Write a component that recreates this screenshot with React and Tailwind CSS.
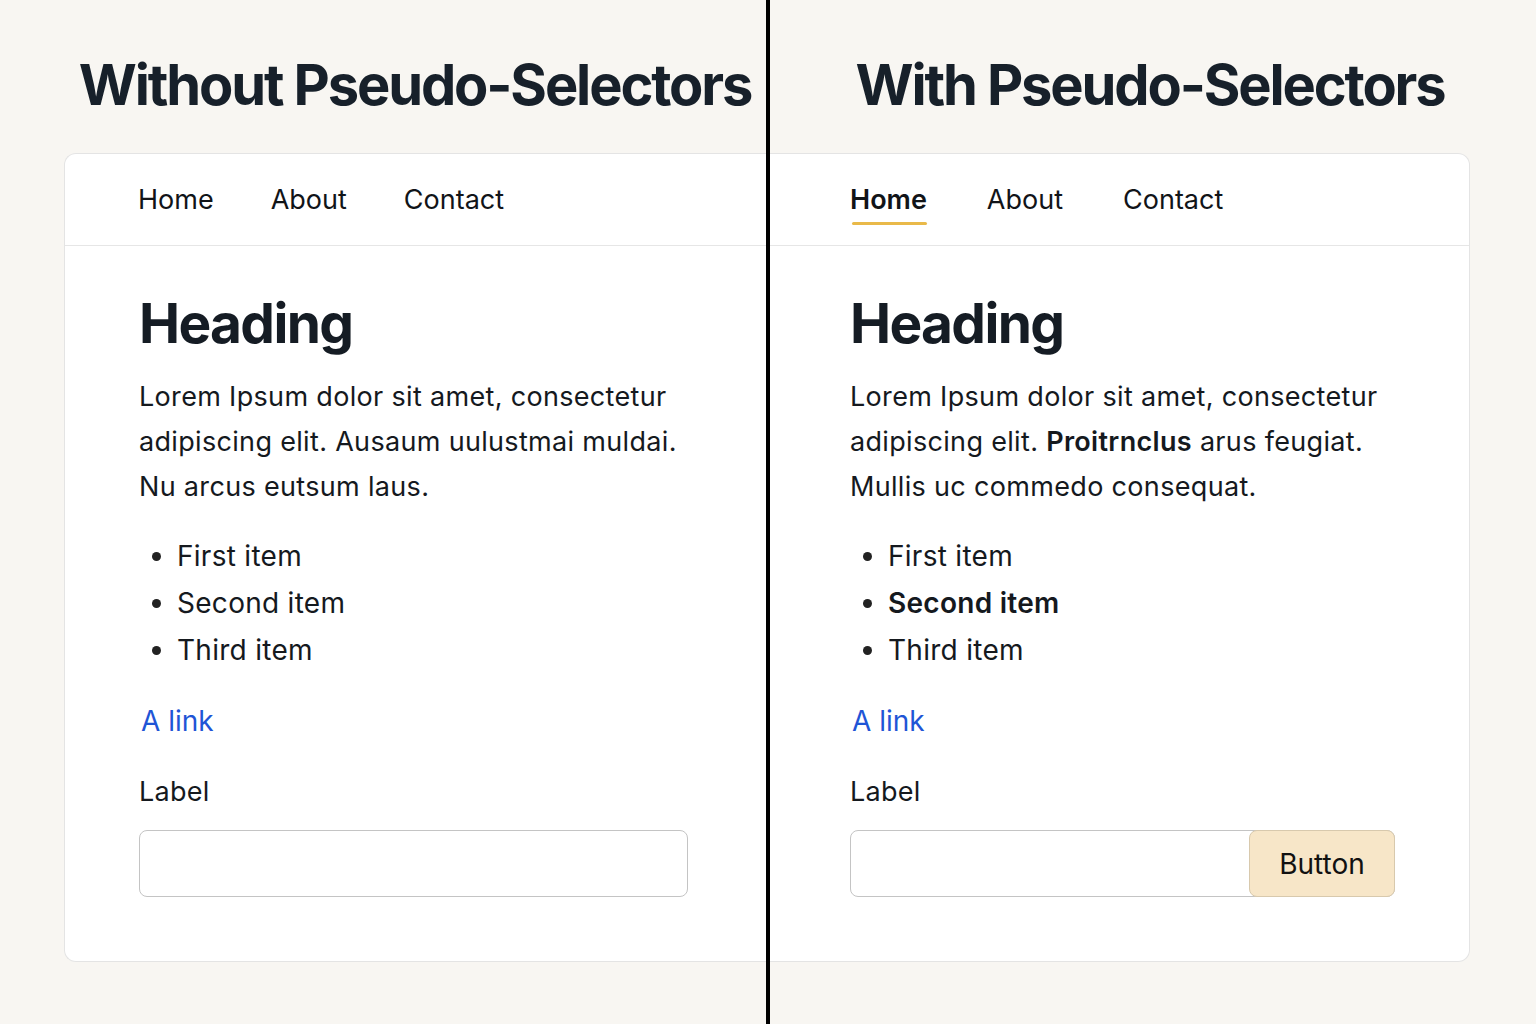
import clsx from 'clsx';

function Nav({ active }) {
  const items = ['Home', 'About', 'Contact'];
  return (
    <div className={clsx('h-[92px] border-b border-[#e6e6e6] flex items-center', active ? 'pl-[80px] gap-[60px]' : 'pl-[73px] gap-[57px]')}>
      {items.map((item) => (
        <span key={item} className="relative text-[27px] leading-none text-[#111418]">
          <span className={clsx(active && item === 'Home' && 'font-semibold')}>{item}</span>
          {active && item === 'Home' && (
            <span className="absolute left-[2px] right-0 -bottom-[12px] h-[3px] bg-[#e9b949] rounded-full" />
          )}
        </span>
      ))}
    </div>
  );
}

function Panel({ pseudo }) {
  return (
    <div
      className={clsx(
        'h-[809px] bg-white border-y border-[#e4e4e4]',
        pseudo ? 'border-r rounded-r-xl' : 'border-l rounded-l-xl'
      )}
    >
      <Nav active={pseudo} />
      <div className={clsx('pt-[50px] text-[#15191e]', pseudo ? 'pl-[80px] pr-[75px]' : 'pl-[74px] pr-[77px]')}>
        <h2 className="text-[55px] leading-none font-bold tracking-[-0.03em] text-[#151c24]">Heading</h2>

        <p className="mt-[23px] text-[27px] leading-[45px] tracking-[0.012em]">
          {pseudo ? (
            <>
              Lorem Ipsum dolor sit amet, consectetur
              <br />
              adipiscing elit. <b className="font-semibold">Proitrnclus</b> arus feugiat.
              <br />
              Mullis uc commedo consequat.
            </>
          ) : (
            <>
              Lorem Ipsum dolor sit amet, consectetur
              <br />
              adipiscing elit. Ausaum uulustmai muldai.
              <br />
              Nu arcus eutsum laus.
            </>
          )}
        </p>

        <ul className="mt-[24px] list-disc pl-[38px] text-[28px] leading-[47px] tracking-[0.01em] marker:text-[#222]">
          <li>First item</li>
          <li className={clsx(pseudo && 'font-semibold')}>Second item</li>
          <li>Third item</li>
        </ul>

        <a href="#" className="block mt-[27px] ml-[2px] text-[28px] leading-[40px] text-[#1f55d6]">
          A link
        </a>

        <label className="block mt-[31px] text-[27px] leading-[40px] tracking-[0.01em]">Label</label>

        {pseudo ? (
          <div className="mt-[18px] flex h-[67px] w-[545px] rounded-lg border border-[#c4c4c4] bg-white">
            <div className="flex-1" />
            <button className="-my-px -mr-px w-[146px] rounded-lg border border-[#d8c9ad] bg-[#f7e6c8] text-[28px] text-[#111]">
              Button
            </button>
          </div>
        ) : (
          <div className="mt-[18px] h-[67px] w-[549px] rounded-lg border border-[#c4c4c4] bg-white" />
        )}
      </div>
    </div>
  );
}

export default function App() {
  return (
    <div className="flex h-[1024px] w-[1536px] bg-[#f8f6f2] font-['Inter','Liberation_Sans',sans-serif] overflow-hidden">
      <div className="w-[766px] pl-[64px] flex flex-col">
        <div className="h-[153px] flex items-center justify-center pt-[16px]">
          <h1 className="text-[56px] font-bold tracking-[-0.038em] text-[#17202a] leading-none">
            Without Pseudo-Selectors
          </h1>
        </div>
        <Panel pseudo={false} />
      </div>

      <div className="w-[4px] h-full bg-black" />

      <div className="w-[700px] flex flex-col">
        <div className="h-[153px] flex items-center justify-center pl-[60px] pt-[16px]">
          <h1 className="text-[56px] font-bold tracking-[-0.038em] text-[#17202a] leading-none">
            With Pseudo-Selectors
          </h1>
        </div>
        <Panel pseudo />
      </div>
    </div>
  );
}
